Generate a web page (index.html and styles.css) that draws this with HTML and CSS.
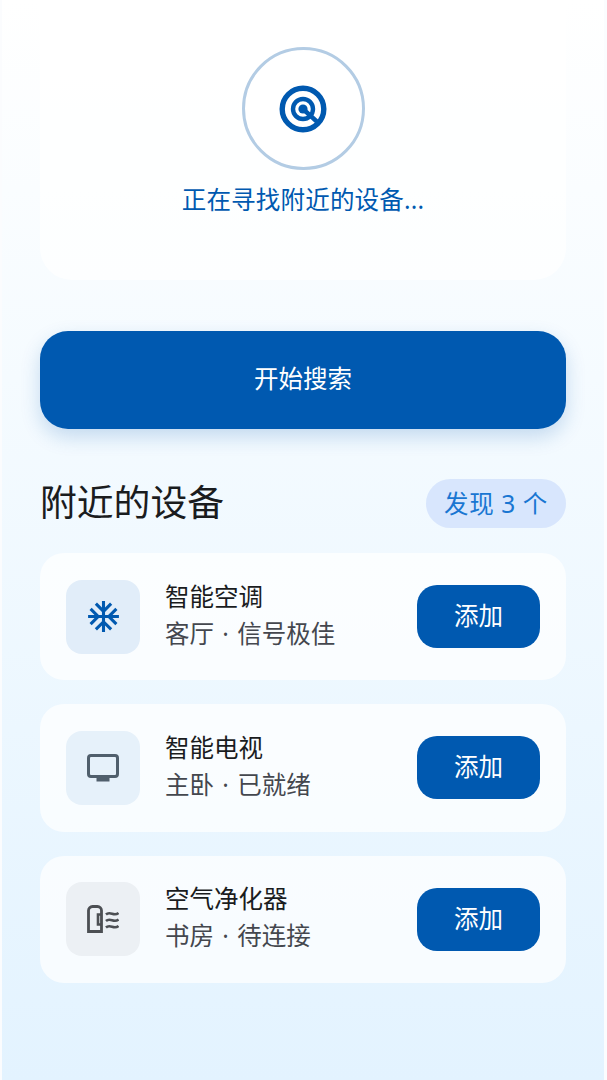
FILE: index.html
```html
<!DOCTYPE html>
<html lang="zh-CN">
<head>
    <meta charset="UTF-8">
    <meta name="viewport" content="width=device-width, initial-scale=1.0">
    <title>添加设备</title>
    <link rel="stylesheet" href="styles.css">
</head>
<body>
    <div class="screen">
        <div class="scan-card">
            <div class="scan-ring">
                <svg class="scan-icon" viewBox="0 0 48 48" width="48" height="48" fill="none" stroke="#0059b0">
                    <circle cx="24" cy="24" r="20.800" stroke-width="5.400"/>
                    <circle cx="24" cy="24" r="10" stroke-width="4.400"/>
                    <circle cx="24" cy="24" r="4.600" fill="#0059b0" stroke="none"/>
                    <path d="M24 24l16 14.500" stroke-width="4.400"/>
                </svg>
            </div>
            <p class="scan-text">正在寻找附近的设备...</p>
        </div>

        <button class="search-button">开始搜索</button>

        <div class="list-head">
            <h2>附近的设备</h2>
            <span class="found-badge">发现 3 个</span>
        </div>

        <div class="device-list">
            <div class="device-row">
                <div class="device-icon icon-blue">
                    <svg viewBox="0 0 24 24" width="37" height="37" fill="#0059b0">
                        <path d="M22 11h-4.170l3.240-3.240-1.410-1.420L15 11h-2V9l4.660-4.660-1.420-1.410L13 6.170V2h-2v4.170L7.760 2.930 6.340 4.340 11 9v2H9L4.340 6.340 2.930 7.760 6.170 11H2v2h4.170l-3.240 3.240 1.410 1.420L9 13h2v2l-4.660 4.660 1.420 1.410L11 17.830V22h2v-4.170l3.240 3.240 1.420-1.410L13 15v-2h2l4.660 4.660 1.410-1.420L17.830 13H22z"/>
                    </svg>
                </div>
                <div class="device-info">
                    <p class="device-name">智能空调</p>
                    <p class="device-meta">客厅 · 信号极佳</p>
                </div>
                <button class="add-button">添加</button>
            </div>

            <div class="device-row">
                <div class="device-icon icon-pale">
                    <svg viewBox="0 0 32 28" width="32" height="28" fill="none">
                        <rect x="1.500" y="1.500" width="29" height="21" rx="2.500" stroke="#505f6c" stroke-width="3"/>
                        <rect x="9.500" y="24" width="13" height="3.500" fill="#505f6c"/>
                    </svg>
                </div>
                <div class="device-info">
                    <p class="device-name">智能电视</p>
                    <p class="device-meta">主卧 · 已就绪</p>
                </div>
                <button class="add-button">添加</button>
            </div>

            <div class="device-row">
                <div class="device-icon icon-grey">
                    <svg viewBox="0 0 32 28" width="32" height="28" fill="none" stroke="#4c4f53" stroke-width="2.800">
                        <path d="M1.500 26.500V5.500a4 4 0 0 1 4-4h5a4 4 0 0 1 4 4v21z"/>
                        <path d="M14.500 9.500h-3.500v10h3.500" stroke-width="2.600"/>
                        <path d="M19 9.500c4-4 8 2.500 12.500-1.500M19 16c4-4 8 2.500 12.500-1.500M19 22.500c4-4 8 2.500 12.500-1.500" stroke-width="2.600"/>
                    </svg>
                </div>
                <div class="device-info">
                    <p class="device-name">空气净化器</p>
                    <p class="device-meta">书房 · 待连接</p>
                </div>
                <button class="add-button">添加</button>
            </div>
        </div>
    </div>
</body>
</html>
```

FILE: styles.css
```css
* {
    box-sizing: border-box;
}
body {
    margin: 0;
    background: #fbfcfe;
    font-family: "Noto Sans", "Noto Sans CJK SC", sans-serif;
}
.screen {
    width: 602px;
    height: 1080px;
    margin-left: 2px;
    padding: 0 38px;
    overflow: hidden;
    background: linear-gradient(180deg, #ffffff 0%, #f5fbff 35%, #e3f3ff 100%);
}
.scan-card {
    height: 280px;
    padding-top: 47px;
    display: flex;
    flex-direction: column;
    align-items: center;
    background: rgba(255, 255, 255, 0.7);
    border-radius: 0 0 32px 32px;
}
.scan-ring {
    width: 123px;
    height: 123px;
    display: flex;
    align-items: center;
    justify-content: center;
    border: 3px solid #b3cce4;
    border-radius: 50%;
    background: #fff;
}
.scan-text {
    margin: 12px 0 0;
    font-size: 24.500px;
    line-height: 35px;
    letter-spacing: 0.200px;
    color: #0059b0;
}
.search-button {
    display: block;
    width: 100%;
    height: 98px;
    margin-top: 51px;
    padding: 0 0 6px;
    border: none;
    border-radius: 28px;
    background: #0059b0;
    color: #fff;
    font-family: inherit;
    font-size: 24.500px;
    box-shadow: 0 8px 20px rgba(0, 89, 176, 0.2);
}
.list-head {
    display: flex;
    justify-content: space-between;
    align-items: center;
    margin-top: 50px;
}
.list-head h2 {
    margin: 0;
    padding-bottom: 2px;
    font-size: 36.800px;
    font-weight: 400;
    line-height: 47px;
    color: #1a1c1e;
}
.found-badge {
    width: 140px;
    height: 49px;
    text-align: center;
    font-size: 24.500px;
    line-height: 49px;
    letter-spacing: 0.600px;
    color: #1976d2;
    background: #d8e6fd;
    border-radius: 25px;
}
.device-list {
    display: flex;
    flex-direction: column;
    gap: 24px;
    margin-top: 25px;
}
.device-row {
    height: 127.300px;
    padding: 0 26px;
    display: flex;
    align-items: center;
    background: rgba(255, 255, 255, 0.72);
    border-radius: 24px;
}
.device-icon {
    width: 74px;
    height: 74px;
    flex-shrink: 0;
    display: flex;
    align-items: center;
    justify-content: center;
    border-radius: 16px;
}
.icon-blue {
    background: #e1edf9;
}
.icon-pale {
    background: #e6f1fa;
}
.icon-grey {
    background: #ecf0f4;
}
.device-info {
    flex: 1;
    margin: 0 0 4px 25px;
}
.device-info p {
    margin: 0;
    font-size: 24.500px;
    line-height: 37px;
    word-spacing: 2px;
}
.device-name {
    color: #1a1c1e;
}
.device-meta {
    color: #44474e;
}
.add-button {
    width: 123px;
    height: 63px;
    padding: 0 0 4px;
    border: none;
    border-radius: 20px;
    background: #0059b0;
    color: #fff;
    font-family: inherit;
    font-size: 24.500px;
}
```
